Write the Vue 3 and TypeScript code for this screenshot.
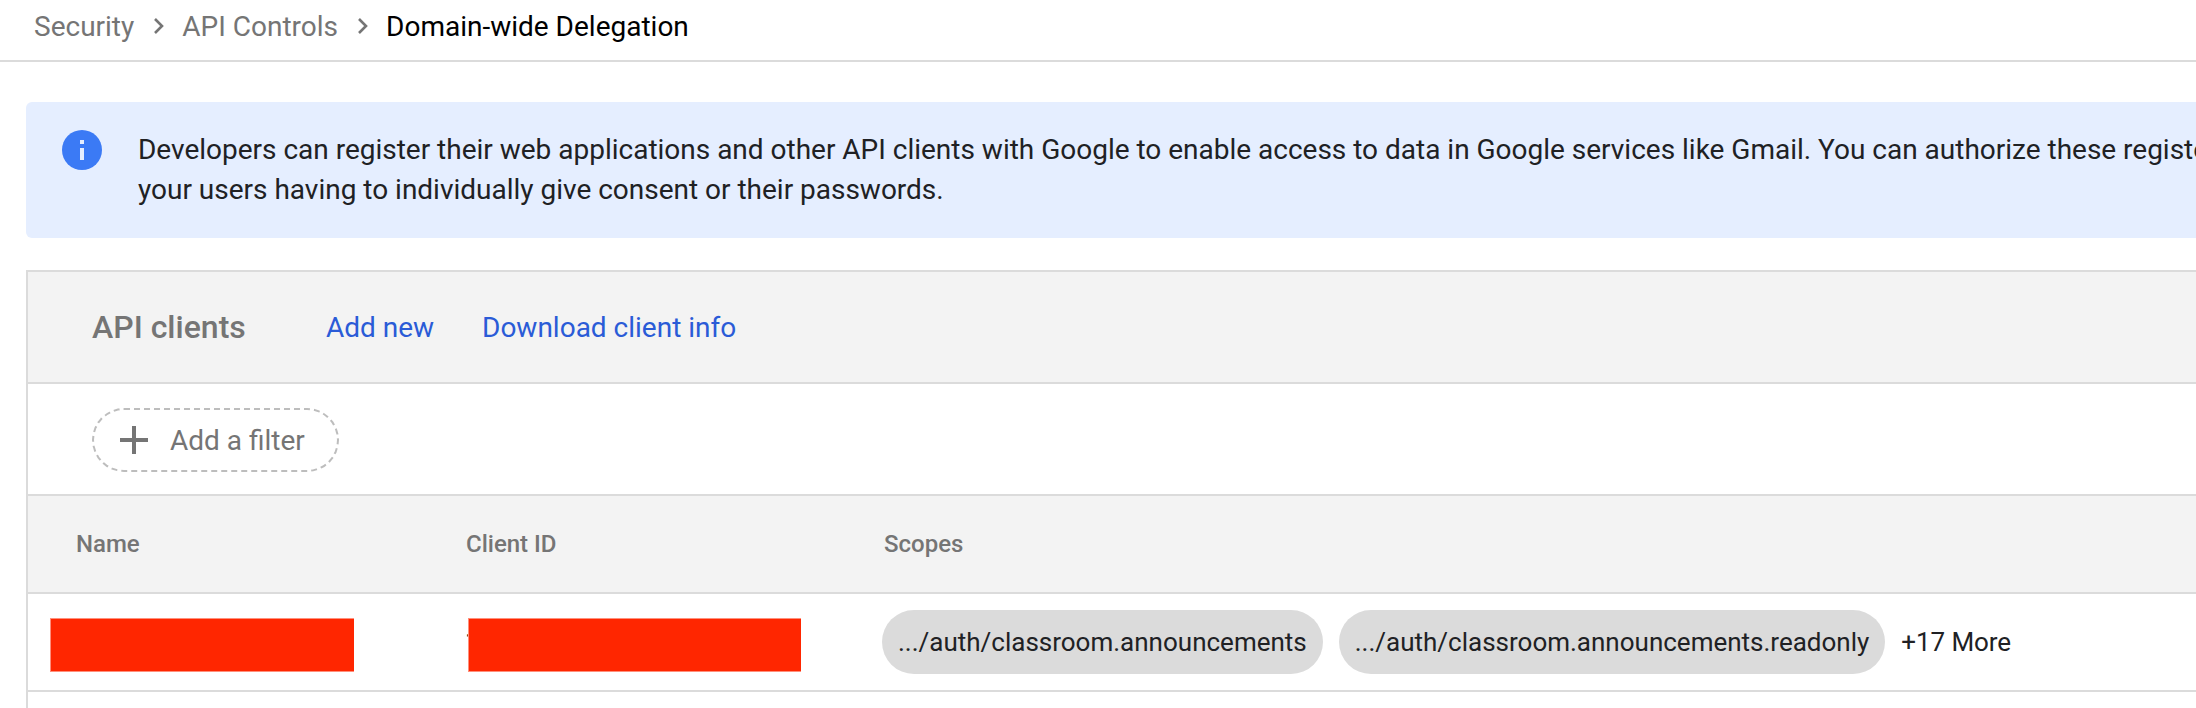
<script setup lang="ts">
const parents: string[] = ['Security', 'API Controls']
const scopes: string[] = ['.../auth/classroom.announcements', '.../auth/classroom.announcements.readonly']
</script>

<template>
  <div class="page">
    <nav class="crumbs">
      <template v-for="p in parents" :key="p">
        <a class="crumb">{{ p }}</a>
        <svg class="chevron" viewBox="0 0 12 18"><path d="M2 2l7 7-7 7" fill="none" stroke="#757575" stroke-width="2.6" /></svg>
      </template>
      <span class="crumb current">Domain-wide Delegation</span>
    </nav>

    <section class="banner">
      <svg class="info" viewBox="0 0 40 40">
        <circle cx="20" cy="20" r="20" fill="#3b7af5" />
        <path d="M18 10h4v4h-4zM18 18h4v12h-4z" fill="#e5eeff" />
      </svg>
      <p class="message">
        <span class="line">Developers can register their web applications and other API clients with Google to enable access to data in Google services like Gmail. You can authorize these registered</span>
        <span class="line">your users having to individually give consent or their passwords.</span>
      </p>
    </section>

    <section class="card">
      <header class="toolbar">
        <h2 class="title">API clients</h2>
        <a class="link add">Add new</a>
        <a class="link">Download client info</a>
      </header>
      <div class="filters">
        <button class="filter">
          <svg class="plus" viewBox="0 0 28 28"><path d="M12 0h4v12h12v4H16v12h-4V16H0v-4h12z" fill="#757575" /></svg>
          <span>Add a filter</span>
        </button>
      </div>
      <div class="row head">
        <span class="c-name">Name</span>
        <span class="c-id">Client ID</span>
        <span>Scopes</span>
      </div>
      <div class="row entry">
        <div class="c-name"><span class="mask mask-name"></span></div>
        <div class="c-id"><span class="digit">1</span><span class="mask mask-id"></span></div>
        <div class="scopes">
          <span v-for="s in scopes" :key="s" class="chip">{{ s }}</span>
          <span class="more">+17 More</span>
        </div>
      </div>
    </section>
  </div>
</template>

<style>
body {
  margin: 0;
  background: #fff;
}
</style>

<style scoped>
.page {
  width: 2196px;
  height: 708px;
  overflow: hidden;
  font-family: Roboto, "Liberation Sans", sans-serif;
  font-size: 28px;
  color: #202124;
  white-space: nowrap;
  box-sizing: border-box;
  display: flex;
  flex-direction: column;
}
.crumbs {
  box-sizing: border-box;
  flex: none;
  height: 62px;
  padding: 0 0 8px 34px;
  border-bottom: 2px solid #dbdbdb;
  display: flex;
  align-items: center;
}
.crumb {
  color: #757575;
}
.current {
  color: #000;
}
.chevron {
  width: 12px;
  height: 18px;
  margin: 0 17px 0 19px;
}
.banner {
  box-sizing: border-box;
  flex: none;
  height: 136px;
  margin: 40px 0 32px 26px;
  padding: 28px 0 0 36px;
  background: #e5eeff;
  border-radius: 6px 0 0 6px;
  display: flex;
  gap: 36px;
  overflow: hidden;
}
.info {
  width: 40px;
  height: 40px;
  flex: none;
}
.message {
  margin: 0;
  line-height: 40px;
  letter-spacing: -0.008px;
}
.line {
  display: block;
}
.card {
  flex: 1;
  margin-left: 26px;
  border: 2px solid #dbdbdb;
  border-right: 0;
  border-bottom: 0;
}
.toolbar {
  height: 110px;
  padding-left: 64px;
  background: #f3f3f3;
  border-bottom: 2px solid #dbdbdb;
  display: flex;
  align-items: center;
}
.title {
  margin: 0;
  width: 234px;
  font-size: 32px;
  font-weight: 500;
  color: #757575;
}
.link {
  color: #2a5bd7;
}
.add {
  width: 156px;
}
.filters {
  height: 108px;
  padding: 2px 0 0 64px;
  border-bottom: 2px solid #dbdbdb;
  display: flex;
  align-items: center;
}
.filter {
  box-sizing: border-box;
  width: 247px;
  height: 64px;
  padding: 0 0 0 26px;
  background: #fff;
  border: 2px dashed #bdbdbd;
  border-radius: 32px;
  display: flex;
  align-items: center;
  gap: 22px;
  font: inherit;
  color: #757575;
}
.plus {
  width: 28px;
  height: 28px;
}
.row {
  height: 96px;
  padding-left: 48px;
  border-bottom: 2px solid #dbdbdb;
  display: grid;
  grid-template-columns: 390px 418px 1fr;
  align-items: center;
}
.head {
  background: #f3f3f3;
  font-size: 24px;
  font-weight: 500;
  color: #757575;
}
.entry {
  font-size: 26px;
}
.c-name,
.c-id {
  position: relative;
}
.digit {
  margin-left: -1px;
}
.mask {
  position: absolute;
  box-sizing: border-box;
  top: 50%;
  height: 54px;
  margin-top: -24px;
  background: #ff2600;
  border: 1px solid #ff8f7c;
  border-right: 0;
}
.mask-name {
  left: -26px;
  width: 304px;
}
.mask-id {
  left: 2px;
  width: 333px;
}
.scopes {
  display: flex;
  align-items: center;
  gap: 16px;
  margin-left: -2px;
}
.chip {
  height: 64px;
  line-height: 64px;
  padding: 0 16px;
  border-radius: 32px;
  background: #dbdbdb;
}
.more {
  letter-spacing: -0.1px;
}
</style>
